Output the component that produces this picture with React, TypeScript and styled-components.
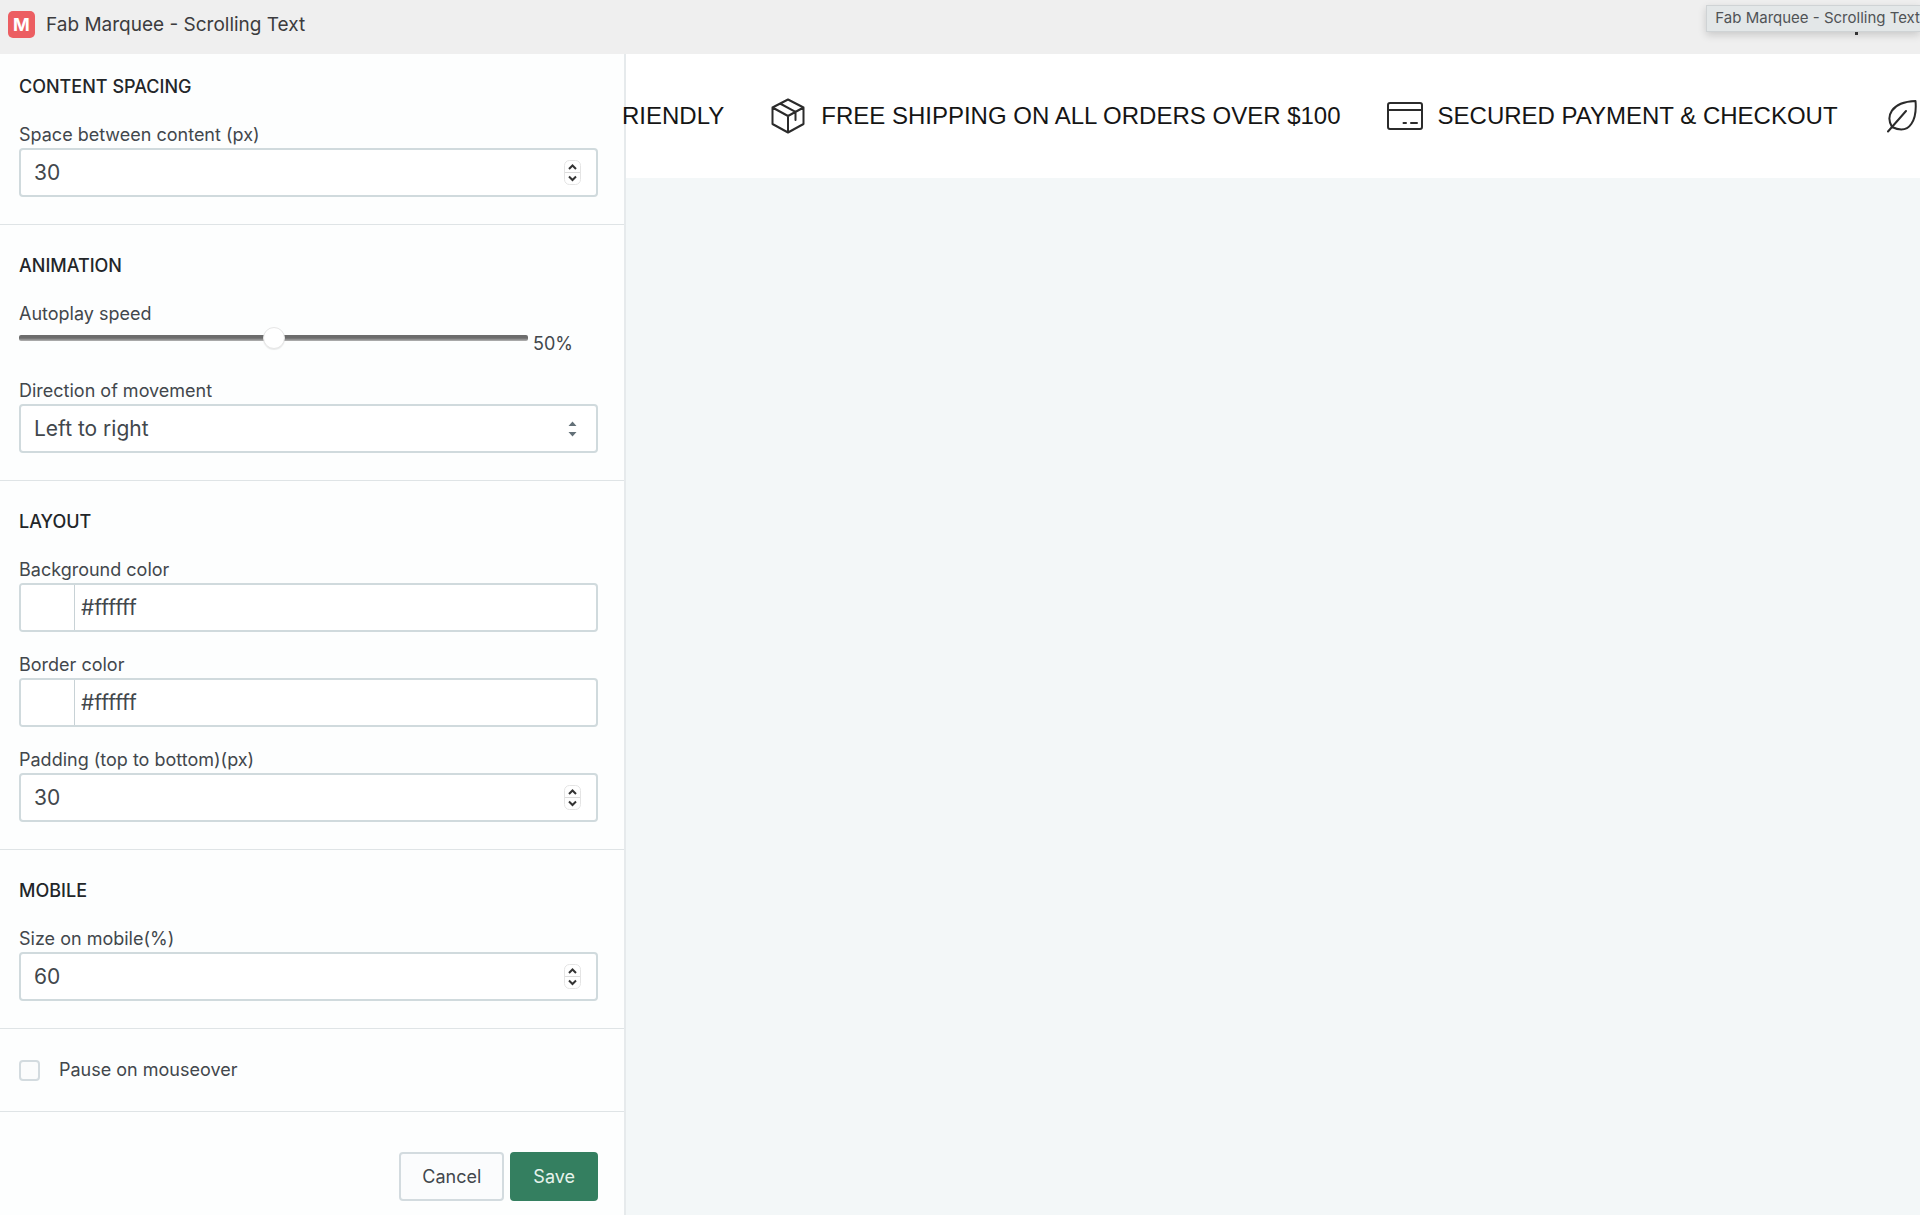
import React, { useId, useState } from "react";
import styled, { createGlobalStyle } from "styled-components";

const GlobalStyle = createGlobalStyle`
  *, *::before, *::after { box-sizing: border-box; }
  body {
    margin: 0;
    background: #f3f7f8;
    color: #42474c;
    font-family: Inter, "Liberation Sans", sans-serif;
    font-size: 18px;
    line-height: 24px;
  }
  input, select, button { font: inherit; color: inherit; margin: 0; }
`;

const Page = styled.div`
  display: flex;
  flex-direction: column;
  min-height: 100vh;
  overflow: hidden;
`;

const TopBar = styled.header`
  position: relative;
  display: flex;
  align-items: center;
  gap: 11px;
  height: 54px;
  padding: 0 8px 5px;
  background: #efefef;
`;

const AppMark = styled.span`
  display: grid;
  place-items: center;
  width: 27px;
  height: 27px;
  border-radius: 5px;
  background: #ec5e62;
  color: #fff;
  font-size: 18px;
  font-weight: 700;
`;

const AppName = styled.h1`
  margin: 0;
  font-size: 19px;
  font-weight: 400;
  color: #3c3c3e;
`;

const Tooltip = styled.div`
  position: absolute;
  top: 5px;
  right: 0;
  height: 27px;
  padding-left: 8px;
  border: 1px solid #cfd3d5;
  border-right: 0;
  background: #e3e7e8;
  box-shadow: 0 3px 8px rgba(0, 0, 0, 0.16);
  color: #505356;
  font-size: 15px;
  font-weight: 400;
  line-height: 24px;
  white-space: nowrap;

  &::after {
    content: "";
    position: absolute;
    top: 26px;
    right: 62px;
    width: 3px;
    height: 3px;
    background: #333;
  }
`;

const Workspace = styled.div`
  display: grid;
  grid-template-columns: 626px minmax(0, 1fr);
  flex: 1;
`;

const Sidebar = styled.form`
  background: #fdfefe;
  border-right: 2px solid #e6eaec;
`;

const Section = styled.section<{ $first?: boolean }>`
  display: flex;
  flex-direction: column;
  gap: 20px;
  padding: ${(p) => (p.$first ? "21px" : "29px")} 26px 27px 19px;
  border-bottom: 1px solid #dfe4e6;
`;

const SectionTitle = styled.h2`
  margin: 0 0 3px;
  font-size: 18px;
  font-weight: 500;
  line-height: 24px;
  color: #232629;
`;

const Label = styled.label`
  display: block;
  line-height: 26px;
`;

const Control = styled.div`
  position: relative;
  display: flex;
  align-items: center;
  height: 49px;
  border: 2px solid #d0dadd;
  border-radius: 4px;
  background: #fff;
  font-size: 21px;
  overflow: hidden;
`;

const NumberInput = styled.input`
  flex: 1;
  min-width: 0;
  height: 100%;
  padding: 0 13px;
  border: 0;
  outline: 0;
  background: none;
  appearance: textfield;

  &::-webkit-inner-spin-button { appearance: none; }
`;

const Stepper = styled.svg`
  flex: none;
  width: 17px;
  height: 25px;
  margin-right: 15px;
`;

const Select = styled.select`
  width: 100%;
  height: 100%;
  padding: 0 13px;
  border: 0;
  outline: 0;
  background: none;
  appearance: none;
`;

const SelectArrows = styled.svg`
  position: absolute;
  right: 19px;
  width: 9px;
  height: 16px;
  pointer-events: none;
`;

const Swatch = styled.input`
  appearance: none;
  flex: none;
  width: 54px;
  height: 100%;
  padding: 0;
  border: 0;
  border-right: 1px solid #c8d2d6;
  background: none;

  &::-webkit-color-swatch-wrapper { padding: 0; }
  &::-webkit-color-swatch { border: 0; }
`;

const HexInput = styled.input`
  flex: 1;
  min-width: 0;
  height: 100%;
  padding: 0 6px;
  border: 0;
  outline: 0;
  background: none;
`;

const SliderRow = styled.div`
  display: flex;
  align-items: flex-start;
  gap: 5px;
  height: 31px;
`;

const Slider = styled.input`
  appearance: none;
  width: 509px;
  height: 22px;
  background: none;

  &::-webkit-slider-runnable-track {
    height: 6px;
    border-radius: 2px;
    background: linear-gradient(#6c6c6c, #6c6c6c 50%, #b4b4b4);
  }
  &::-webkit-slider-thumb {
    appearance: none;
    width: 22px;
    height: 22px;
    margin-top: -8px;
    border: 1px solid #e6e6e6;
    border-radius: 50%;
    background: #fff;
    box-shadow: 0 1px 1px rgba(0, 0, 0, 0.08);
  }
`;

const SliderValue = styled.output`
  padding-top: 5px;
`;

const CheckRow = styled.label`
  display: flex;
  align-items: center;
  gap: 19px;
  padding: 29px 19px;
  border-bottom: 1px solid #dfe4e6;
`;

const Checkbox = styled.input`
  appearance: none;
  width: 21px;
  height: 21px;
  border: 2px solid #d3dbdf;
  border-radius: 4px;
  background: #fbfcfc;

  &:checked { background: #347f60; }
`;

const Actions = styled.div`
  display: flex;
  justify-content: flex-end;
  gap: 6px;
  padding: 40px 26px 15px 19px;
`;

const Button = styled.button<{ $primary?: boolean }>`
  height: 49px;
  padding: 0 21px;
  border: 2px solid ${(p) => (p.$primary ? "#347f60" : "#d3dbdf")};
  border-radius: 4px;
  background: ${(p) => (p.$primary ? "#347f60" : "#fbfcfd")};
  color: ${(p) => (p.$primary ? "#e6f3ec" : "#42474c")};
`;

const Preview = styled.main`
  min-width: 0;
`;

const Marquee = styled.div`
  padding: 30px 0;
  background: #fff;
`;

const Track = styled.div`
  display: flex;
  align-items: center;
  gap: 46px;
  height: 64px;
  margin-left: -4px;
  color: #151515;
  font-family: "Liberation Sans", Arial, sans-serif;
  font-size: 24px;
  white-space: nowrap;
`;

const MarqueeItem = styled.div`
  display: flex;
  align-items: center;
  gap: 15px;
`;

const MarqueeIcon = styled.svg`
  flex: none;
  width: 36px;
  height: 36px;
  fill: none;
  stroke: #2b2b2b;
  stroke-width: 2;
  stroke-linecap: round;
  stroke-linejoin: round;
`;

function NumberField({ label, initial }: { label: string; initial: number }) {
  const id = useId();
  const [value, setValue] = useState(String(initial));
  return (
    <div>
      <Label htmlFor={id}>{label}</Label>
      <Control>
        <NumberInput id={id} type="number" value={value} onChange={(e) => setValue(e.target.value)} />
        <Stepper viewBox="0 0 17 25" fill="none" aria-hidden="true">
          <rect x="0.5" y="0.5" width="16" height="24" rx="5" stroke="#e4e4e4" />
          <path d="M1 12.5h15" stroke="#dcdcdc" />
          <path d="M5 9l3.5-3.5L12 9M5 16.5l3.5 3.5 3.5-3.5" stroke="#333" strokeWidth="2" />
        </Stepper>
      </Control>
    </div>
  );
}

function ColorField({ label }: { label: string }) {
  const id = useId();
  const [value, setValue] = useState("#ffffff");
  return (
    <div>
      <Label htmlFor={id}>{label}</Label>
      <Control>
        <Swatch type="color" aria-label={label} value={value} onChange={(e) => setValue(e.target.value)} />
        <HexInput id={id} type="text" value={value} onChange={(e) => setValue(e.target.value)} />
      </Control>
    </div>
  );
}

export default function App() {
  const [speed, setSpeed] = useState(50);
  return (
    <>
      <GlobalStyle />
      <Page>
        <TopBar>
          <AppMark>M</AppMark>
          <AppName>Fab Marquee - Scrolling Text</AppName>
          <Tooltip role="tooltip">Fab Marquee - Scrolling Text</Tooltip>
        </TopBar>
        <Workspace>
          <Sidebar onSubmit={(e) => e.preventDefault()}>
            <Section $first>
              <SectionTitle>CONTENT SPACING</SectionTitle>
              <NumberField label="Space between content (px)" initial={30} />
            </Section>
            <Section>
              <SectionTitle>ANIMATION</SectionTitle>
              <div>
                <Label htmlFor="speed">Autoplay speed</Label>
                <SliderRow>
                  <Slider
                    id="speed"
                    type="range"
                    min={0}
                    max={100}
                    value={speed}
                    onChange={(e) => setSpeed(Number(e.target.value))}
                  />
                  <SliderValue htmlFor="speed">{`${speed}%`}</SliderValue>
                </SliderRow>
              </div>
              <div>
                <Label htmlFor="direction">Direction of movement</Label>
                <Control>
                  <Select id="direction" defaultValue="ltr">
                    <option value="ltr">Left to right</option>
                    <option value="rtl">Right to left</option>
                  </Select>
                  <SelectArrows viewBox="0 0 9 16" fill="#637078" aria-hidden="true">
                    <path d="M0.500 5L4.500 0.500L8.500 5ZM0.500 11L4.500 15.500L8.500 11Z" />
                  </SelectArrows>
                </Control>
              </div>
            </Section>
            <Section>
              <SectionTitle>LAYOUT</SectionTitle>
              <ColorField label="Background color" />
              <ColorField label="Border color" />
              <NumberField label="Padding (top to bottom)(px)" initial={30} />
            </Section>
            <Section>
              <SectionTitle>MOBILE</SectionTitle>
              <NumberField label="Size on mobile(%)" initial={60} />
            </Section>
            <CheckRow>
              <Checkbox type="checkbox" />
              Pause on mouseover
            </CheckRow>
            <Actions>
              <Button type="button">Cancel</Button>
              <Button type="submit" $primary>Save</Button>
            </Actions>
          </Sidebar>
          <Preview>
            <Marquee>
              <Track>
                <MarqueeItem>RIENDLY</MarqueeItem>
                <MarqueeItem>
                  <MarqueeIcon viewBox="0 0 36 36" aria-hidden="true">
                    <path d="M18 1.500L33.500 9.500V26L18 34.500L2.500 26V9.500ZM2.500 9.500L18 18L33.500 9.500M18 18V34.500M10 5.500L25.500 13.800V22" />
                  </MarqueeIcon>
                  FREE SHIPPING ON ALL ORDERS OVER $100
                </MarqueeItem>
                <MarqueeItem>
                  <MarqueeIcon viewBox="0 0 36 36" aria-hidden="true">
                    <rect x="1" y="5" width="34" height="26" rx="2" />
                    <path d="M1 12H35M16.500 25H19M24 25H30" />
                  </MarqueeIcon>
                  SECURED PAYMENT &amp; CHECKOUT
                </MarqueeItem>
                <MarqueeItem>
                  <MarqueeIcon viewBox="0 0 36 36" aria-hidden="true">
                    <path d="M4 33.500L22 13M8 29C2 19 6 4 31.500 3C33 20 27 38 8 29Z" />
                  </MarqueeIcon>
                </MarqueeItem>
              </Track>
            </Marquee>
          </Preview>
        </Workspace>
      </Page>
    </>
  );
}
